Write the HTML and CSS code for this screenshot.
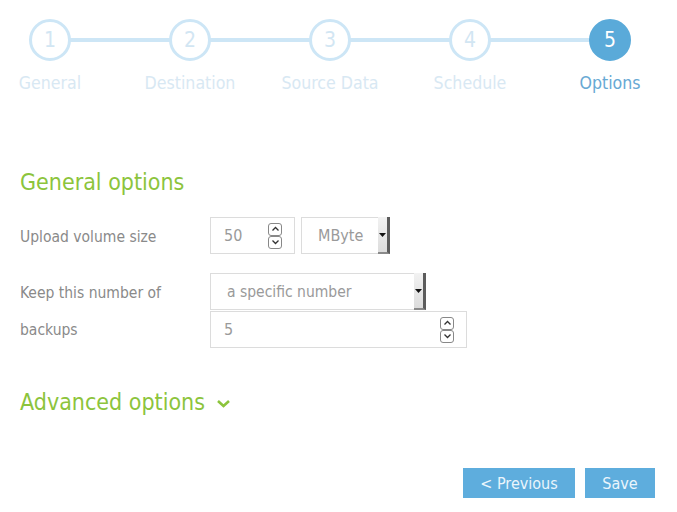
FILE: index.html
```html
<!DOCTYPE html>
<html>
<head>
<meta charset="utf-8">
<link rel="stylesheet" href="styles.css">
</head>
<body>
<div class="page">
  <div class="steps">
    <div class="step"><div class="circle">1</div><div class="step-label">General</div></div>
    <div class="step"><div class="circle">2</div><div class="step-label">Destination</div></div>
    <div class="step"><div class="circle">3</div><div class="step-label">Source Data</div></div>
    <div class="step"><div class="circle">4</div><div class="step-label">Schedule</div></div>
    <div class="step active"><div class="circle">5</div><div class="step-label">Options</div></div>
  </div>

  <h2 class="section-title">General options</h2>

  <div class="form-row">
    <div class="label">Upload volume size</div>
    <div class="controls">
      <div class="field num small"><span class="val">50</span>
        <span class="spin"><span class="spin-btn"><svg width="9" height="6" viewBox="0 0 9 6"><path d="M1.5 4.5 L4.5 1.5 L7.5 4.5" fill="none" stroke="#333" stroke-width="1.3"/></svg></span><span class="spin-btn"><svg width="9" height="6" viewBox="0 0 9 6"><path d="M1.5 1.5 L4.5 4.5 L7.5 1.5" fill="none" stroke="#333" stroke-width="1.3"/></svg></span></span>
      </div>
      <div class="field select unit"><span class="val">MByte</span><span class="drop"><svg width="7" height="4" viewBox="0 0 7 4"><path d="M0 0 H7 L3.5 4 Z" fill="#111"/></svg></span></div>
    </div>
  </div>

  <div class="form-row two">
    <div class="label wrap">Keep this number of backups</div>
    <div class="controls col">
      <div class="field select keep"><span class="val">a specific number</span><span class="drop"><svg width="7" height="4" viewBox="0 0 7 4"><path d="M0 0 H7 L3.5 4 Z" fill="#111"/></svg></span></div>
      <div class="field num wide"><span class="val">5</span>
        <span class="spin"><span class="spin-btn"><svg width="9" height="6" viewBox="0 0 9 6"><path d="M1.5 4.5 L4.5 1.5 L7.5 4.5" fill="none" stroke="#333" stroke-width="1.3"/></svg></span><span class="spin-btn"><svg width="9" height="6" viewBox="0 0 9 6"><path d="M1.5 1.5 L4.5 4.5 L7.5 1.5" fill="none" stroke="#333" stroke-width="1.3"/></svg></span></span>
      </div>
    </div>
  </div>

  <h2 class="section-title advanced">Advanced options <svg class="chev" width="15" height="9" viewBox="0 0 15 9"><path d="M2 2 L7.5 7 L13 2" fill="none" stroke="#8cc43c" stroke-width="2.6"/></svg></h2>

  <div class="buttons">
    <button class="btn prev">&lt; Previous</button>
    <button class="btn save">Save</button>
  </div>
</div>
</body>
</html>
```

FILE: styles.css
```css
* { box-sizing: border-box; }
html, body { margin: 0; padding: 0; background: #fff; }
body { font-family: "DejaVu Sans Condensed", "DejaVu Sans", sans-serif; }
.page { width: 677px; height: 512px; padding: 0 20px; }

.steps {
  display: grid;
  grid-template-columns: repeat(5, 140px);
  margin-left: -40px;
  padding-top: 19px;
}
.step { position: relative; display: flex; flex-direction: column; align-items: center; }
.step + .step::before {
  content: "";
  position: absolute;
  top: 19px;
  right: 50%;
  width: 140px;
  height: 4px;
  background: #cde6f6;
  z-index: 0;
}
.circle {
  position: relative;
  z-index: 1;
  width: 42px; height: 42px;
  border-radius: 50%;
  border: 3px solid #cde6f6;
  background: #fff;
  color: #d2e6f3;
  font-size: 21px;
  display: flex; align-items: center; justify-content: center;
}
.step-label {
  margin-top: 11px;
  font-size: 17.6px;
  line-height: 22px;
  color: #d8e8f3;
}
.step.active .circle { background: #5aaad9; border-color: #5aaad9; color: #fff; }
.step.active .step-label { color: #67a9d4; }

.section-title {
  margin: 0;
  font-weight: normal;
  font-size: 23px;
  line-height: 30px;
  color: #8cc43c;
  margin-top: 73px;
}
.form-row { display: flex; margin-top: 20px; }
.form-row.two { margin-top: 17px; }
.label {
  width: 190px;
  font-size: 15.5px;
  line-height: 37px;
  padding-top: 2px;
  color: #8a8a8a;
}
.label.wrap { padding-right: 20px; }
.controls { display: flex; gap: 6px; }
.controls.col { flex-direction: column; gap: 1px; }
.field {
  height: 37px;
  border: 1px solid #dcdcdc;
  display: flex;
  align-items: center;
  font-size: 16px;
  color: #9a9a9a;
  position: relative;
}
.field.small { width: 85px; padding-left: 13px; }
.field.wide { width: 257px; padding-left: 13px; }
.field.unit { width: 89px; padding-left: 16px; }
.field.keep { width: 216px; padding-left: 16px; font-size: 15.5px; }
.field .val { flex: 1; }
.spin { display: flex; flex-direction: column; margin-right: 12px; }
.spin-btn {
  width: 14px; height: 13px;
  border: 1px solid #888;
  border-radius: 3px;
  display: flex; align-items: center; justify-content: center;
  background: #fff;
}
.select { align-self: stretch; }
.drop {
  align-self: stretch;
  width: 12px;
  background: linear-gradient(#f2f2f2, #dcdcdc);
  border-right: 3px solid #5c5c5c;
  border-bottom: 2px solid #8a8a8a;
  display: flex; align-items: center; justify-content: center;
  margin: -1px -1px -1px 0;
}

.section-title.advanced { margin-top: 38px; display: flex; align-items: center; gap: 11px; }
.chev { margin-top: 2px; }

.buttons { display: flex; justify-content: flex-end; gap: 10px; margin-top: 51px; padding-right: 2px; }
.btn {
  border: none;
  background: #5eaddd;
  color: #eaf5fc;
  font-family: inherit;
  font-size: 16px;
  height: 30px;
  padding: 0;
}
.btn.prev { width: 112px; }
.btn.save { width: 70px; }
```
